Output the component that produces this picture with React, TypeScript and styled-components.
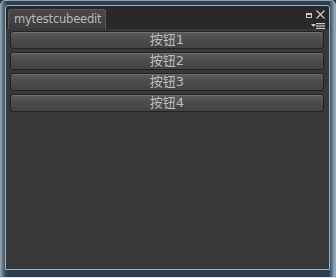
import React from "react";
import styled, { createGlobalStyle } from "styled-components";

const Global = createGlobalStyle`
  html, body { margin: 0; padding: 0; background: #1e2b37; }
  #root { width: 336px; height: 278px; }
`;

const Outer = styled.div`
  box-sizing: border-box;
  width: 336px;
  height: 278px;
  border: 1px solid #9aa3ab;
  border-bottom-color: #dfe4e8;
  border-radius: 5px 5px 0 0;
  background: linear-gradient(to right, #7f93a6 0px, #4a6174 3px, #2b3f51 6px, #2b3f51 calc(100% - 6px), #5a758b calc(100% - 3px), #9aaebf 100%);
  padding: 4px 5px 7px 4px;
  display: flex;
`;

const Panel = styled.div`
  flex: 1;
  display: flex;
  flex-direction: column;
  border: 1px solid #9fb0bf;
  border-radius: 3px 3px 0 0;
  background: #292929;
  overflow: hidden;
`;

const TabBar = styled.div`
  height: 23px;
  display: flex;
  align-items: flex-end;
  padding-left: 2px;
  position: relative;
  flex: none;
`;

const Tab = styled.div`
  height: 20px;
  box-sizing: border-box;
  padding: 0 4px 0 5px;
  border: 1px solid #585858;
  border-bottom: none;
  border-radius: 3px 3px 0 0;
  background: linear-gradient(#484848, #3c3c3c);
  color: #bababa;
  font-family: "DejaVu Sans", sans-serif;
  font-size: 11.5px;
  letter-spacing: -0.2px;
  line-height: 19px;
`;

const Controls = styled.div`
  position: absolute;
  right: 4px;
  top: 4px;
  display: flex;
  flex-direction: column;
  align-items: flex-end;
  gap: 4px;
`;

const Content = styled.div`
  flex: 1;
  background: #383838;
  padding: 2px 5px 0 4px;
  display: flex;
  flex-direction: column;
  gap: 3px;
`;

const Button = styled.div`
  height: 18px;
  box-sizing: border-box;
  border: 1px solid #232323;
  border-radius: 3px;
  background: linear-gradient(#5c5c5c, #4d4d4d 40%, #434343);
  box-shadow: inset 0 1px 0 #6e6e6e;
  color: #bdbdbd;
  font-family: "DejaVu Sans", "Noto Sans CJK SC", sans-serif;
  font-size: 13px;
  line-height: 16px;
  text-align: center;
`;

export default function App() {
  return (
    <>
      <Global />
      <Outer>
        <Panel>
          <TabBar>
            <Tab>mytestcubeedit</Tab>
            <Controls>
              <svg width="20" height="9" viewBox="0 0 20 9">
                <rect x="1.5" y="3.5" width="5" height="4" fill="none" stroke="#c8c8c8" strokeWidth="1" />
                <rect x="1.5" y="3.5" width="5" height="1.5" fill="#c8c8c8" />
                <path d="M11.5 0.5 L19.5 8.5 M19.5 0.5 L11.5 8.5" stroke="#c8c8c8" strokeWidth="1.2" />
              </svg>
              <svg width="14" height="6" viewBox="0 0 14 6">
                <path d="M0 1 L5 1 L2.5 4 Z" fill="#c8c8c8" />
                <rect x="5" y="0" width="9" height="1.2" fill="#c8c8c8" />
                <rect x="5" y="2.4" width="9" height="1.2" fill="#c8c8c8" />
                <rect x="5" y="4.8" width="9" height="1.2" fill="#c8c8c8" />
              </svg>
            </Controls>
          </TabBar>
          <Content>
            {["按钮1", "按钮2", "按钮3", "按钮4"].map((t) => (
              <Button key={t}>{t}</Button>
            ))}
          </Content>
        </Panel>
      </Outer>
    </>
  );
}
